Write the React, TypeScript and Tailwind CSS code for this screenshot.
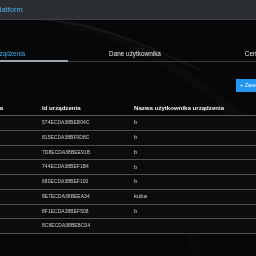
import React from "react";

const rows = [
  { id: "574ECDA38BEB04C", name: "b" },
  { id: "815ECDA38BF0D8C", name: "b" },
  { id: "7D8ECDA38BEE91B", name: "b" },
  { id: "744ECDA38BEF1B4", name: "b" },
  { id: "680ECDA38BEF100", name: "b" },
  { id: "8E7ECDA38BEEA34", name: "kuba" },
  { id: "8F1ECDA38BEF508", name: "b" },
  { id: "8C8ECDA38BEBC04", name: "" },
];

export default function App() {
  return (
    <div
      className="relative w-[256px] h-[256px] overflow-hidden bg-[#070707] text-[#e6e6e6] antialiased"
      style={{ fontFamily: '"Liberation Sans", Arial, sans-serif' }}
    >
      <svg className="absolute left-0 top-0 pointer-events-none" width="256" height="256" viewBox="0 0 256 256">
        <path d="M44 20 C 80 22, 120 32, 200 70" stroke="#ffffff" strokeOpacity="0.05" strokeWidth="2" fill="none" />
        <path d="M60 22 C 110 30, 170 55, 256 130" stroke="#ffffff" strokeOpacity="0.02" strokeWidth="8" fill="none" />
        <path d="M160 130 C 175 170, 190 210, 196 256" stroke="#ffffff" strokeOpacity="0.015" strokeWidth="10" fill="none" />
      </svg>
      <div className="relative ml-[-66px] w-[420px] [will-change:transform]">
        <div className="h-[20px] bg-[#2b2e33] border-b border-[#3b3f45] flex items-center pl-[48px]">
          <span className="text-[7.5px] text-[#4cb2ee]">IoT Platform</span>
        </div>
        <div className="mt-[24px] flex h-[18px] border-b border-[#3a3a3a] relative">
          <div className="w-[134px] flex items-center justify-center pt-[2px] text-[6.4px] text-[#45acf0] relative">
            Dane urządzenia
            <div className="absolute left-0 right-0 bottom-[-1px] h-[2px] bg-[#9aa7b3]" />
          </div>
          <div className="w-[134px] flex items-center justify-center pt-[2px] text-[6.4px] text-[#e8e8e8]">
            Dane użytkownika
          </div>
          <div className="w-[134px] flex items-center justify-center pt-[2px] text-[6.4px] text-[#e8e8e8]">
            Cena urządzenia
          </div>
        </div>
        <div className="mt-[17px] flex pl-[302px]">
          <div className="h-[13px] px-[4px] bg-[#2196f3] text-white text-[5.5px] flex items-center whitespace-nowrap">
            + Zarejestruj urządzenie
          </div>
        </div>
        <div className="mt-[8px]">
          <div className="flex h-[16px] items-center pt-[1px] border-b border-[#5a5a5a] text-[6.1px] font-bold text-[#f2f2f2]">
            <div className="w-[108px] pl-[17px]">Nazwa urządzenia</div>
            <div className="w-[92px]">Id urządzenia</div>
            <div>Nazwa użytkownika urządzenia</div>
          </div>
          {rows.map((r) => (
            <div key={r.id} className="flex h-[14.75px] items-center border-b border-[#4e4e4e] bg-[#0c0c0c]">
              <div className="w-[108px]" />
              <div className="w-[92px] text-[4.9px] text-[#d0d0d0] tracking-[0.1px]">{r.id}</div>
              <div className="text-[6px] text-[#d0d0d0]">{r.name}</div>
            </div>
          ))}
        </div>
      </div>
    </div>
  );
}
